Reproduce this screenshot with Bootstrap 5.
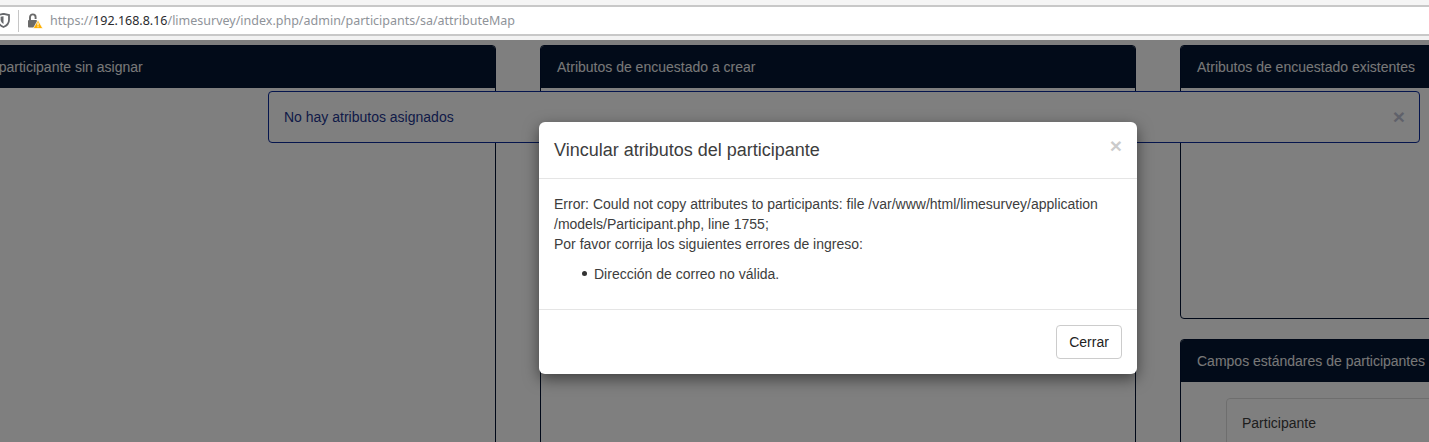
<!DOCTYPE html>
<html lang="es">
<head>
<meta charset="utf-8">
<title>Vincular atributos</title>
<link rel="stylesheet" href="https://cdn.jsdelivr.net/npm/bootstrap@5.3.0/dist/css/bootstrap.min.css">
<style>
html,body{height:442px;overflow:hidden;background:#fff;}
body{font-family:"Liberation Sans",Arial,sans-serif;font-size:14px;line-height:20px;color:#3d3d3d;}
.chrome-top{height:5px;background:#f5f5f5;}
.chrome-bar{background:#fff;border-top:2px solid #c8c8c8;border-bottom:2px solid #c8c8c8;box-sizing:content-box;height:27px;}
.chrome-strip{height:4px;background:#f2f2f2;}
.shield{margin-left:-3px;width:13px;height:15px;flex:none;}
.sep{width:1px;height:22px;background:#c6c6c6;margin:0 8px;flex:none;}
.lockwrap{width:16px;height:16px;margin-right:7px;flex:none;}
.urlline{font-family:"Noto Sans",sans-serif;font-size:12.5px;color:#8f9399;white-space:nowrap;}
.urlline b{font-weight:400;color:#2a2a2e;}
.stage{position:relative;height:402px;overflow:hidden;background:#fff;}
.cols{display:flex;gap:44px;margin-left:-100px;padding-top:5px;width:1900px;}
.colm{width:596px;flex:none;}
.pane{border:1px solid #001030;border-radius:4px;overflow:hidden;background:#fff;}
.pane-head{background:#041632;color:#f0f0f0;height:43px;margin:-1px -1px 0;padding:12px 17px 0;line-height:20px;}
.pane-tall{height:500px;}
.pane-ex{height:274px;margin-bottom:20px;}
.pane-std{height:300px;}
.inner-card{margin:16px 0 0 45px;border:1px solid #ddd;border-radius:4px;padding:14px 15px;height:200px;}
.msg{position:absolute;left:268px;top:51px;width:1152px;height:52px;background:#fff;border:1px solid #0b2a9a;border-radius:4px;color:#23368f;padding:15px;display:flex;justify-content:space-between;}
.msg-x{font-weight:700;font-size:21px;color:#00105a;opacity:.25;line-height:20px;margin-right:-1px;}
.veil{position:absolute;inset:0;background:#000;opacity:.5;}
.dlg{position:absolute;left:539px;top:82px;width:598px;}
.dlg .modal-content{background:#fff;border:0;border-radius:6px;box-shadow:0 5px 15px rgba(0,0,0,.5);font-size:14px;}
.dlg .modal-header{padding:15px;height:57px;border-bottom:1px solid #e5e5e5;align-items:flex-start;justify-content:space-between;border-radius:0;}
.dlg .modal-title{font-size:18px;line-height:27px;margin:0;font-weight:400;color:#3d3d3d;}
.dlg-x{font-weight:700;font-size:21px;line-height:17px;color:#000;opacity:.2;}
.dlg .modal-body{padding:15px;height:130px;}
.dlg .modal-body ul{margin:10px 0 0;padding-left:40px;list-style:none;}
.dlg .modal-body li{position:relative;}
.dlg .modal-body li::before{content:"";position:absolute;left:-12px;top:7px;width:5px;height:5px;border-radius:50%;background:#333;}
.dlg .modal-footer{padding:15px;height:65px;border-top:1px solid #e5e5e5;}
.btn-shut{margin:0;height:34px;width:66px;padding:0;font-size:14px;line-height:32px;background:#fff;border:1px solid #ccc;border-radius:4px;color:#222;}
</style>
</head>
<body>
<div class="chrome-top"></div>
<div class="chrome-bar d-flex align-items-center">
  <svg class="shield" viewBox="0 0 13 15"><path d="M1 2 6.500 .8 12 2v5c0 3.400-2.600 5.800-5.500 7C3.600 12.800 1 10.400 1 7z" fill="none" stroke="#66686c" stroke-width="1.800"/><path d="M6.500 3.200v7.800C5 10.200 3.600 8.600 3.600 6.600V3.800z" fill="#66686c"/></svg>
  <span class="sep"></span>
  <svg class="lockwrap" viewBox="0 0 16 16"><rect x="1" y="7" width="9" height="7.500" rx="1" fill="#6a6a6a"/><path d="M3 7V4.200a2.800 2.800 0 0 1 5.600 0V6" fill="none" stroke="#6a6a6a" stroke-width="1.900"/><path d="M11 7 15.800 15.500H6.200z" fill="#ffb000" stroke="#fff" stroke-width=".7"/><path d="M11 9.500v3M11 13.200v1" stroke="#fff" stroke-width="1.100"/></svg>
  <span class="urlline">https://<b>192.168.8.16</b>/limesurvey/index.php/admin/participants/sa/attributeMap</span>
</div>
<div class="chrome-strip"></div>
<div class="stage">
  <div class="cols">
    <div class="colm">
      <div class="pane pane-tall"><div class="pane-head">Atributos del participante sin asignar</div></div>
    </div>
    <div class="colm">
      <div class="pane pane-tall"><div class="pane-head">Atributos de encuestado a crear</div></div>
    </div>
    <div class="colm">
      <div class="pane pane-ex"><div class="pane-head">Atributos de encuestado existentes</div></div>
      <div class="pane pane-std"><div class="pane-head">Campos estándares de participantes</div>
        <div class="inner-card">Participante</div>
      </div>
    </div>
  </div>
  <div class="msg"><span>No hay atributos asignados</span><span class="msg-x">×</span></div>
  <div class="veil"></div>
  <div class="dlg">
    <div class="modal-content">
      <div class="modal-header">
        <h4 class="modal-title">Vincular atributos del participante</h4>
        <span class="dlg-x">×</span>
      </div>
      <div class="modal-body">
        Error: Could not copy attributes to participants: file /var/www/html/limesurvey/application<br>/models/Participant.php, line 1755;<br>Por favor corrija los siguientes errores de ingreso:
        <ul><li>Dirección de correo no válida.</li></ul>
      </div>
      <div class="modal-footer">
        <button type="button" class="btn btn-shut">Cerrar</button>
      </div>
    </div>
  </div>
</div>
<script src="https://cdn.jsdelivr.net/npm/bootstrap@5.3.0/dist/js/bootstrap.bundle.min.js"></script>
</body>
</html>
